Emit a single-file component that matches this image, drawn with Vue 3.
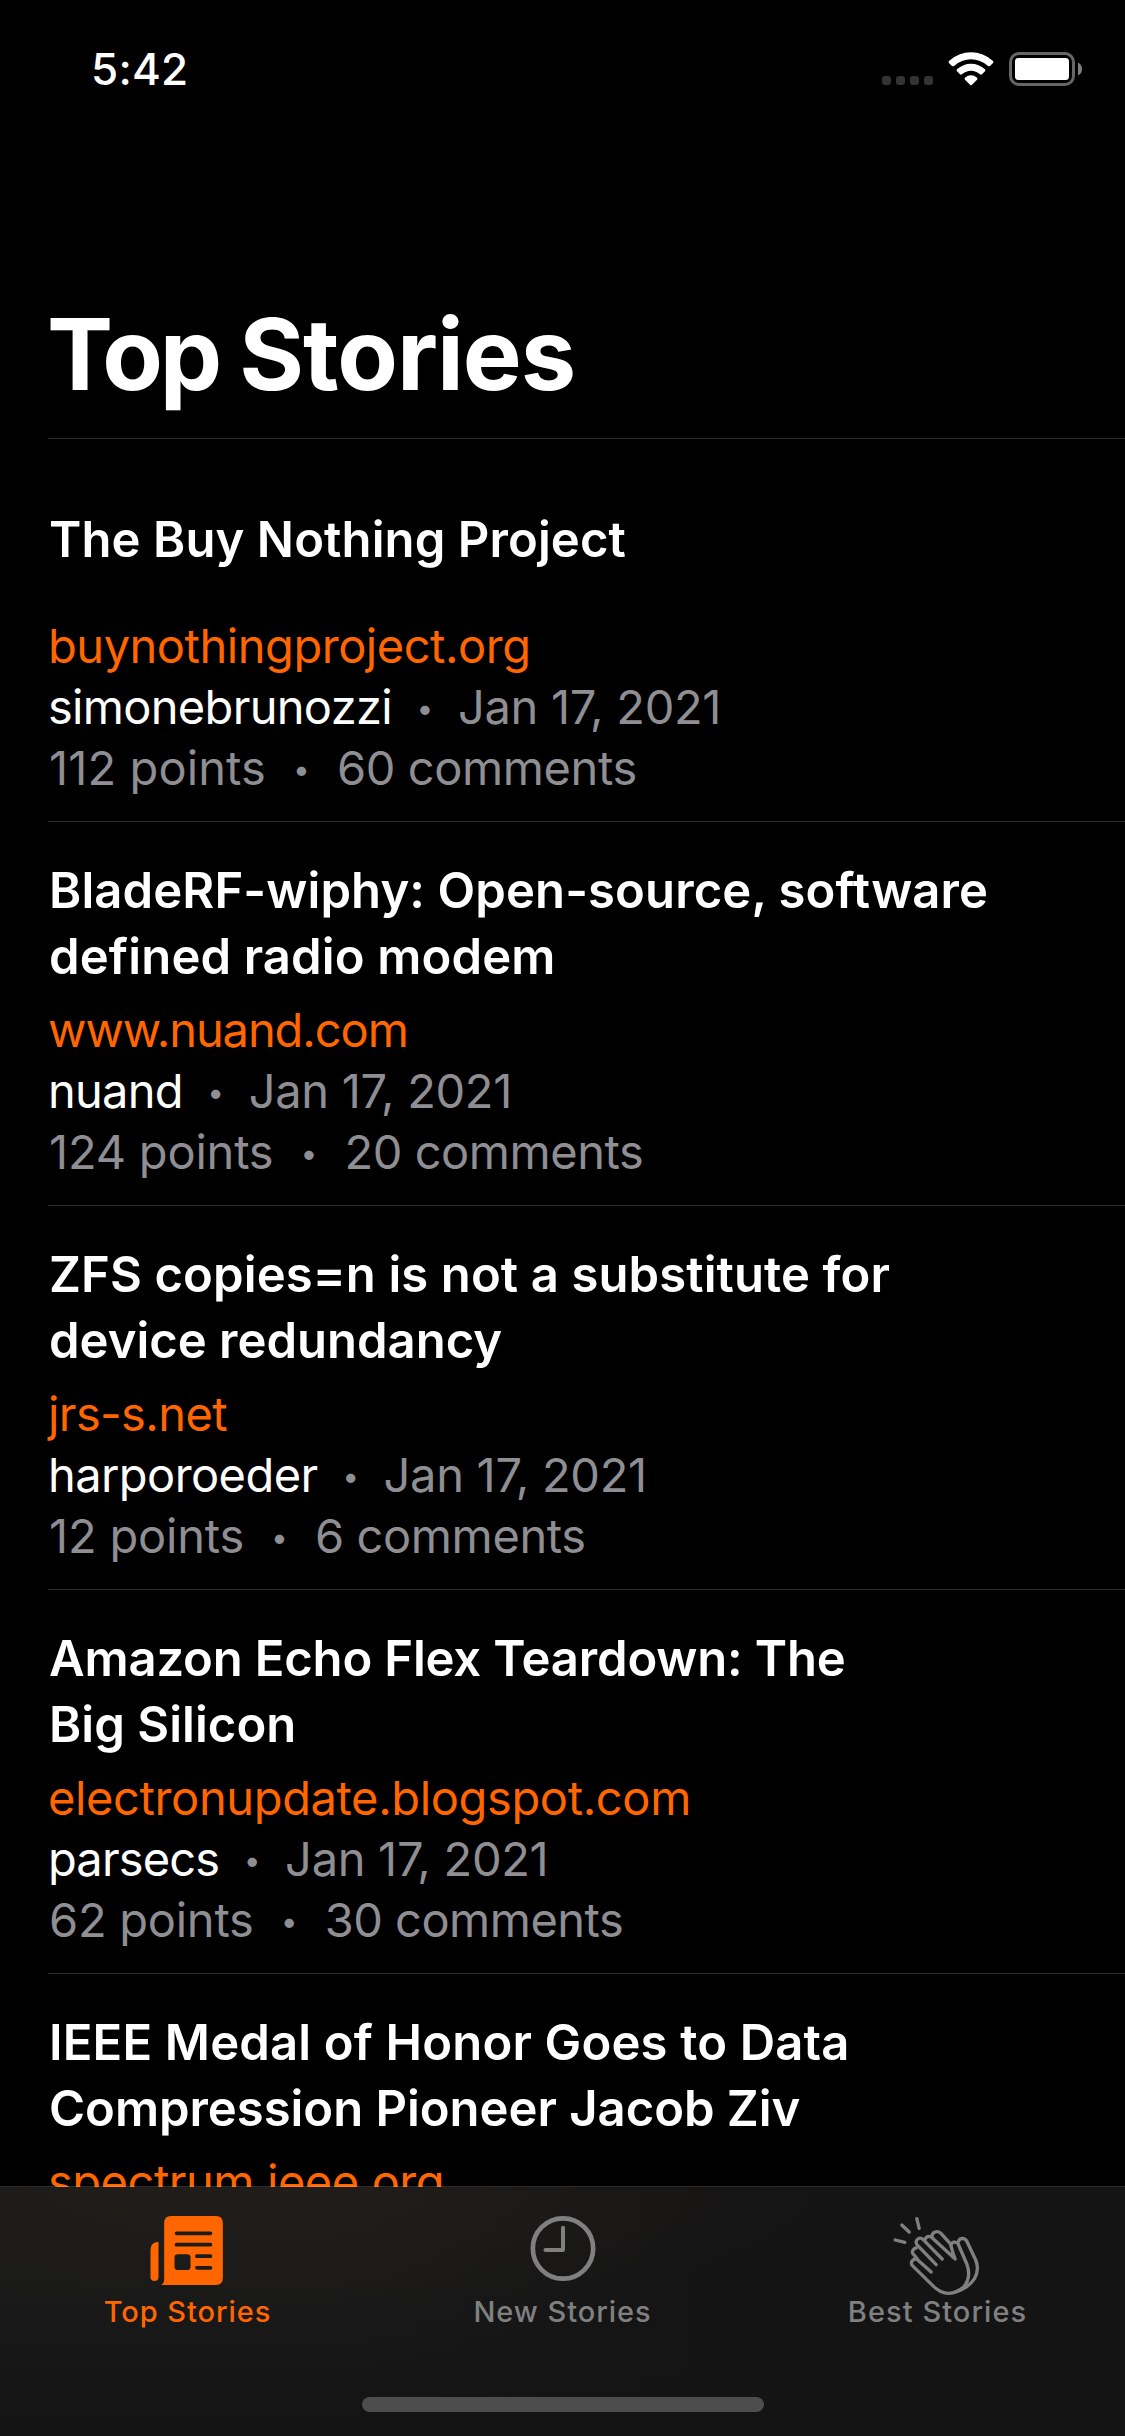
<script setup>
// Each text run carries its own letter-spacing (px) in `ls`.
const stories = [
  {
    title: [{ t: 'The Buy Nothing Project', ls: 0.09 }],
    site: { t: 'buynothingproject.org', ls: -0.47 },
    author: { t: 'simonebrunozzi', ls: -0.69 },
    points: { t: '112 points', ls: 0.1 },
    comments: { t: '60 comments', ls: -0.39 },
  },
  {
    title: [
      { t: 'BladeRF-wiphy: Open-source, software', ls: 0.11 },
      { t: 'defined radio modem', ls: 0.14 },
    ],
    site: { t: 'www.nuand.com', ls: -1.07 },
    author: { t: 'nuand', ls: -0.75 },
    points: { t: '124 points', ls: -0.2 },
    comments: { t: '20 comments', ls: -0.45 },
  },
  {
    title: [
      { t: 'ZFS copies=n is not a substitute for', ls: 0.11 },
      { t: 'device redundancy', ls: 0 },
    ],
    site: { t: 'jrs-s.net', ls: -0.6 },
    author: { t: 'harporoeder', ls: -0.58 },
    points: { t: '12 points', ls: -0.2 },
    comments: { t: '6 comments', ls: -0.4 },
  },
  {
    title: [
      { t: 'Amazon Echo Flex Teardown: The', ls: -0.17 },
      { t: 'Big Silicon', ls: 0.05 },
    ],
    site: { t: 'electronupdate.blogspot.com', ls: -0.37 },
    author: { t: 'parsecs', ls: -0.87 },
    points: { t: '62 points', ls: -0.25 },
    comments: { t: '30 comments', ls: -0.5 },
  },
  {
    title: [
      { t: 'IEEE Medal of Honor Goes to Data', ls: 0.17 },
      { t: 'Compression Pioneer Jacob Ziv', ls: -0.03 },
    ],
    site: { t: 'spectrum.ieee.org', ls: -0.49 },
  },
]
const ls = (run) => ({ letterSpacing: run.ls + 'px' })
</script>

<template>
  <div class="screen">
    <header class="status">
      <span class="time">5:42</span>
      <div class="indicators">
        <div class="signal"><i /><i /><i /><i /></div>
        <svg class="wifi" viewBox="0 0 138 102" width="46" height="34">
          <g fill="#fff">
            <path d="M3 33 Q0 30 3 27 Q32 1 69 1 Q106 1 135 27 Q138 30 135 33 L126 42 Q123 44 120 42 Q97 22 69 22 Q41 22 18 42 Q15 44 12 42Z" />
            <path d="M27 58 Q24 55 27 52 Q45 35 69 35 Q93 35 111 52 Q114 55 111 58 L102 67 Q99 69 96 67 Q84 56 69 56 Q54 56 42 67 Q39 69 36 67Z" />
            <path d="M51 83 Q48 80 51 77 Q59 70 69 70 Q79 70 87 77 Q90 80 87 83 L72 98 Q69 101 66 98Z" />
          </g>
        </svg>
        <svg class="battery" viewBox="0 0 74 34" width="74" height="34">
          <rect x="1.5" y="1.5" width="63" height="31" rx="8.5" fill="none" stroke="#666" stroke-width="3" />
          <rect x="6" y="6" width="54" height="22" rx="3.5" fill="#fff" />
          <path d="M69 10.5 Q73 12.500 73 17 Q73 21.500 69 23.500Z" fill="#808080" />
        </svg>
      </div>
    </header>

    <main class="content">
      <h1><span class="first">Top </span>Stories</h1>
      <article v-for="s in stories" :key="s.site.t" class="story">
        <h2>
          <span v-for="line in s.title" :key="line.t" class="line" :style="ls(line)">{{ line.t }}</span>
        </h2>
        <p class="site" :style="ls(s.site)">{{ s.site.t }}</p>
        <template v-if="s.author">
          <p><span class="author" :style="ls(s.author)">{{ s.author.t }}</span><span class="dot">•</span><span class="date">Jan 17, 2021</span></p>
          <p class="stats"><span :style="ls(s.points)">{{ s.points.t }}</span><span class="dot wide">•</span><span :style="ls(s.comments)">{{ s.comments.t }}</span></p>
        </template>
      </article>
    </main>

    <nav class="tabs">
      <div class="row">
        <a class="tab active">
          <svg viewBox="142.5 60 300 270" width="100" height="90">
            <path fill="currentColor" d="M242 78H376Q397 78 397 99V264Q397 285 376 285H212Q221 281 221 268V99Q221 78 242 78Z" />
            <path fill="currentColor" d="M204 155V261a12 12 0 0 1-24 0V179Q180 156 204 155Z" />
            <g stroke="#1c1c1b" stroke-width="11" stroke-linecap="round">
              <path d="M258 130H360M258 164H360M319 198.500H360M319 233.500H360" />
            </g>
            <rect x="252" y="193" width="48" height="47" rx="10" fill="#1c1c1b" />
          </svg>
          <span>Top Stories</span>
        </a>
        <a class="tab">
          <svg viewBox="157.5 60 300 270" width="100" height="90" fill="none" stroke="currentColor" stroke-linecap="round" stroke-linejoin="round">
            <circle cx="307.500" cy="175.500" r="90.500" stroke-width="14" />
            <path d="M307.500 113V180H255" stroke-width="12" />
          </svg>
          <span>New Stories</span>
        </a>
        <a class="tab best">
          <svg viewBox="172.5 60 300 270" width="100" height="90" fill="none" stroke="currentColor" stroke-width="10" stroke-linecap="round" stroke-linejoin="round">
            <path d="M194 150L223 157M214 105L236 126M259 86L266 115" />
            <g transform="translate(219 105)">
              <path d="M83 141L42 104A12 12 0 0 0 26 121L88 182Q110 205 135 205Q163 204 182 184Q204 156 190 117L164 57A12 12 0 0 0 142 61Q147 82 155 102L84 37A12 12 0 0 0 65 50L116 102" />
              <path d="M60 45A12 12 0 0 0 40 59L98 119" />
              <path d="M38 69A12 12 0 0 0 28 86L42 102" />
              <path d="M85 35Q87 20 101 20Q108 20 113 26L143 59" />
              <path d="M165 49Q167 40 178 40Q186 41 190 49L217 106Q228 135 213 161Q194 190 155 201" />
            </g>
          </svg>
          <span>Best Stories</span>
        </a>
      </div>
      <div class="home" />
    </nav>
  </div>
</template>

<style>
body {
  background: #000;
}
</style>

<style scoped>
.screen {
  position: relative;
  width: 1125px;
  height: 2436px;
  overflow: hidden;
  background: #000;
  color: #fff;
  font-family: Inter, "Liberation Sans", sans-serif;
}
.status {
  display: flex;
  justify-content: space-between;
  align-items: flex-start;
  height: 132px;
  padding: 0 42px 0 91px;
  box-sizing: border-box;
}
.time {
  padding-top: 42px;
  font-size: 44px;
  font-weight: 550;
  line-height: 54px;
  letter-spacing: 0.2px;
}
.indicators {
  display: flex;
  align-items: flex-end;
  padding-top: 52px;
}
.signal {
  display: flex;
  gap: 5px;
  margin-bottom: 1px;
}
.signal i {
  width: 9px;
  height: 9px;
  border-radius: 3px;
  background: #333;
}
.wifi,
.battery {
  margin-left: 15px;
}
.content {
  padding-left: 48px;
}
h1 {
  margin: 0;
  height: 307px;
  box-sizing: border-box;
  padding-top: 162px;
  border-bottom: 1px solid #2c2c2e;
  font-size: 99px;
  font-weight: 700;
  line-height: 120px;
  letter-spacing: -1px;
  text-indent: -1px;
  white-space: nowrap;
}
.first {
  letter-spacing: -3.2px;
}
.story {
  height: 384px;
  box-sizing: border-box;
  padding-top: 36px;
  border-bottom: 1px solid #2c2c2e;
}
.story:nth-of-type(1) {
  height: 383px;
  padding-top: 35px;
}
h2 {
  display: flex;
  flex-direction: column;
  justify-content: center;
  height: 132px;
  margin: 0 0 9px 1px;
  font-size: 49px;
  font-weight: 600;
  line-height: 66px;
}
.line {
  white-space: nowrap;
}
p {
  margin: 0;
  height: 61px;
  font-size: 47px;
  line-height: 61px;
  color: #8e8e93;
  white-space: nowrap;
}
.stats {
  padding-left: 1px;
}
.site {
  color: #ff6600;
}
.author {
  color: #fff;
}
.date {
  letter-spacing: -0.3px;
}
.dot {
  display: inline-block;
  width: 66px;
  font-size: 30px;
  line-height: 30px;
  text-align: center;
  vertical-align: 5px;
}
.dot.wide {
  width: 71px;
}
.tabs {
  position: absolute;
  left: 0;
  right: 0;
  bottom: 0;
  height: 250px;
  box-sizing: border-box;
  border-top: 1px solid rgba(255, 255, 255, 0.17);
  background: radial-gradient(ellipse 560px 130px at 270px 0, rgba(33, 28, 25, 0.9), transparent), linear-gradient(rgba(20, 20, 20, 0) 20%, #141414 95%), linear-gradient(90deg, #1b1c1b 30%, #141414 62%);
  background-clip: padding-box;
  display: flex;
  flex-direction: column;
  align-items: center;
}
.row {
  display: flex;
  width: 100%;
  height: 210px;
}
.tab {
  flex: 1;
  display: flex;
  flex-direction: column;
  align-items: center;
  padding-top: 23px;
  color: #808080;
  font-size: 29px;
  font-weight: 500;
  line-height: 36px;
  letter-spacing: 0.94px;
}
.tab.best {
  letter-spacing: 1.05px;
}
.tab span {
  margin-top: -6px;
}
.tab.active {
  color: #ff6600;
}
.home {
  width: 402px;
  height: 15px;
  border-radius: 8px;
  background: #4d4d4d;
}
</style>
